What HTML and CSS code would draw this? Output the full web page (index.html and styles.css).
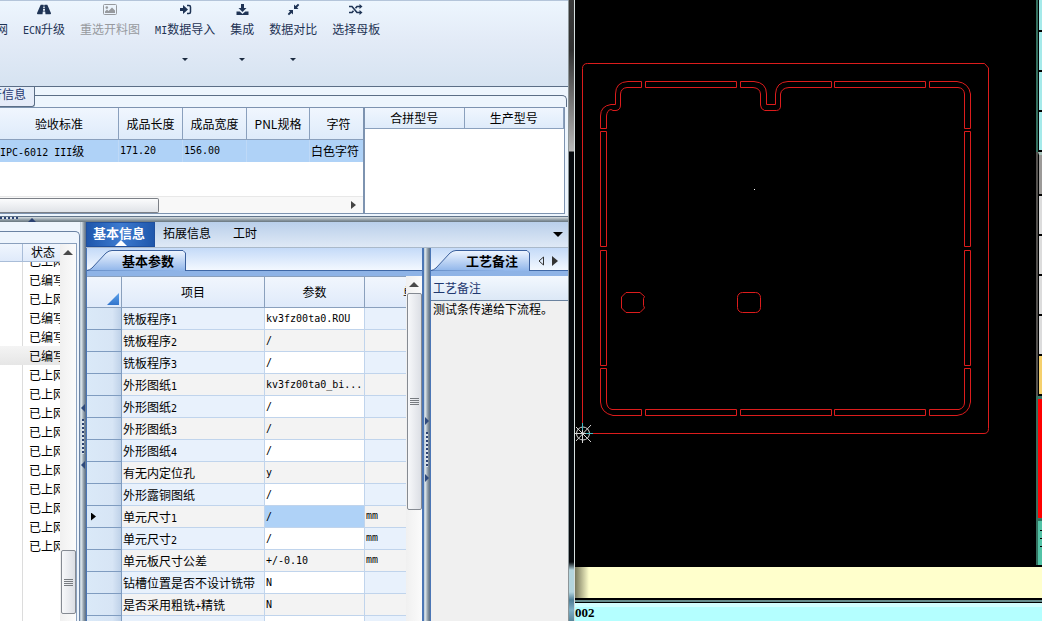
FILE: index.html
```html
<!DOCTYPE html>
<html lang="zh-CN">
<head>
<meta charset="utf-8">
<title>基本信息</title>
<link rel="stylesheet" href="styles.css">
</head>
<body>
<div class="desktop">
  <main class="app">
    <nav class="toolbar">
      <button class="tool"><span class="tool-icon"></span><span class="tool-label">网</span></button>
      <button class="tool"><svg class="tool-icon" viewBox="0 0 576 512" width="14" height="13"><path fill="currentColor" d="M573.19 402.67l-139.79-320C428.43 71.29 417.6 64 405.68 64h-97.59l2.45 23.16c.5 4.72-3.21 8.84-7.96 8.84h-29.16c-4.75 0-8.46-4.12-7.96-8.84L267.91 64h-97.59c-11.93 0-22.76 7.29-27.73 18.67L2.8 402.67C-6.45 423.86 8.31 448 30.54 448h196.84l10.31-97.68c.86-8.14 7.72-14.32 15.91-14.32h68.8c8.19 0 15.05 6.18 15.91 14.32L348.62 448h196.84c22.23 0 36.99-24.14 27.73-45.33zM260.4 135.16a8 8 0 0 1 7.96-7.16h39.29c4.09 0 7.53 3.09 7.96 7.16l4.6 43.58c.75 7.09-4.81 13.26-11.93 13.26h-40.54c-7.13 0-12.68-6.17-11.93-13.26l4.59-43.58zM315.64 304h-55.29c-9.5 0-16.91-8.23-15.91-17.68l5.07-48c.86-8.14 7.72-14.32 15.91-14.32h45.15c8.19 0 15.05 6.18 15.91 14.32l5.07 48c1 9.45-6.41 17.68-15.91 17.68z"/></svg><span class="tool-label"><span class="code">ECN</span>升级</span></button>
      <button class="tool" disabled><svg class="tool-icon" viewBox="0 0 14 13" width="14" height="13"><rect x=".5" y="1.5" width="13" height="10" rx="1" fill="none" stroke="currentColor"/><circle cx="3.8" cy="4.6" r="1.3" fill="currentColor"/><path fill="currentColor" d="M2 10V8.500L4 6.500L5.500 8L9 4.500L12 7.500V10Z"/></svg><span class="tool-label">重选开料图</span></button>
      <button class="tool"><svg class="tool-icon" viewBox="0 0 13 13" width="13" height="13"><path fill="currentColor" d="M1 5H4V2L9 6.500L4 11V8H1Z"/><path fill="none" stroke="currentColor" stroke-width="1.500" d="M8 2.500H10Q11.500 2.500 11.500 4V9Q11.500 10.500 10 10.500H8"/></svg><span class="tool-label"><span class="code">MI</span>数据导入</span><i class="caret"></i></button>
      <button class="tool"><svg class="tool-icon" viewBox="0 0 13 13" width="13" height="13"><path fill="currentColor" d="M5 1H8V5H10.500L6.500 9L2.500 5H5ZM.5 8.500H3.700L6.500 11L9.300 8.500H12.500V12H.5Z"/></svg><span class="tool-label">集成</span><i class="caret"></i></button>
      <button class="tool"><svg class="tool-icon" viewBox="0 0 13 13" width="13" height="13"><path fill="currentColor" d="M7 6V1.500L8.500 3L11 .7L12.300 2L10 4.500L11.500 6ZM6 7V11.500L4.500 10L2 12.300L.7 11L3 8.500L1.500 7Z"/></svg><span class="tool-label">数据对比</span><i class="caret"></i></button>
      <button class="tool"><svg class="tool-icon" viewBox="0 0 14 13" width="14" height="13"><path fill="none" stroke="currentColor" stroke-width="1.600" d="M0 3.500H3L8 9.500H11M0 9.500H3L4.500 7.700M6.500 5.200L8 3.500H11"/><path fill="currentColor" d="M10.500 1L13.500 3.500L10.500 6ZM10.500 7L13.500 9.500L10.500 12Z"/></svg><span class="tool-label">选择母板</span></button>
    </nav>

    <section class="upper">
      <div class="upper-tabs"><button class="upper-tab">字符信息</button><div class="upper-rule"></div></div>
      <div class="upper-grids">
        <div class="spec-grid">
          <table class="spec-table">
            <colgroup><col><col class="col-64"><col class="col-64"><col class="col-63"><col class="col-53"></colgroup>
            <thead><tr><th>验收标准</th><th>成品长度</th><th>成品宽度</th><th>PNL规格</th><th>字符</th></tr></thead>
            <tbody><tr><td class="flush"><span class="code">IPC-6012 III</span>级</td><td class="code">171.20</td><td class="code">156.00</td><td></td><td>白色字符</td></tr></tbody>
          </table>
          <div class="hscroll"><div class="hthumb"></div><i class="arrow-right"></i></div>
        </div>
        <div class="model-grid">
          <table class="model-table"><thead><tr><th>合拼型号</th><th>生产型号</th></tr></thead></table>
        </div>
      </div>
    </section>

    <div class="hsplit"><i class="dots-h"></i><i class="grip-up"></i></div>

    <section class="lower">
      <aside class="status-pane">
        <div class="status-group">
          <div class="status-list">
            <div class="status-head"><span></span><b>状态</b></div>
            <div class="status-view">
              <table class="status-table"><tbody>
                <tr><td></td><td>已上网</td></tr><tr><td></td><td>已编写</td></tr><tr><td></td><td>已上网</td></tr><tr><td></td><td>已编写</td></tr><tr><td></td><td>已编写</td></tr><tr class="current"><td></td><td>已编写</td></tr><tr><td></td><td>已上网</td></tr><tr><td></td><td>已上网</td></tr><tr><td></td><td>已上网</td></tr><tr><td></td><td>已上网</td></tr><tr><td></td><td>已上网</td></tr><tr><td></td><td>已上网</td></tr><tr><td></td><td>已上网</td></tr><tr><td></td><td>已上网</td></tr><tr><td></td><td>已上网</td></tr><tr><td></td><td>已上网</td></tr>
              </tbody></table>
            </div>
          </div>
          <div class="vscroll"><i class="arrow-up"></i><div class="vthumb low"><i class="lines"></i></div></div>
        </div>
      </aside>
      <div class="vsplit left"><i class="grip-left"></i><i class="dots-v"></i><i class="grip-left"></i></div>

      <div class="detail">
        <div class="main-tabs" role="tablist">
          <button class="main-tab active" role="tab" aria-selected="true">基本信息</button>
          <button class="main-tab" role="tab">拓展信息</button>
          <button class="main-tab" role="tab">工时</button>
          <button class="tab-menu" aria-label="更多"><i class="arrow-down"></i></button>
        </div>
        <div class="detail-body">
          <div class="param-pane">
            <div class="sub-tabs" role="tablist">
              <button class="sub-tab" role="tab"><svg class="tab-shape" viewBox="0 0 99 21" preserveAspectRatio="none"><defs><linearGradient id="tabfill" x2="0" y2="1"><stop stop-color="#f0f6ff"/><stop offset="1" stop-color="#8fb5ea"/></linearGradient></defs><path d="M0 20.500Q3 20 5 18L19 3Q22 .5 25 .5H96L98.500 3V21" fill="url(#tabfill)" stroke="#3a5f9c"/></svg><span>基本参数</span></button>
            </div>
            <div class="param-area">
              <div class="param-view">
                <table class="param-table">
                  <colgroup><col class="col-mark"><col><col class="col-value"><col class="col-unit"></colgroup>
                  <thead><tr><th class="corner"><i></i></th><th>项目</th><th>参数</th><th class="cut">单位</th></tr></thead>
                  <tbody>
                    <tr><th></th><td>铣板程序<span class="code">1</span></td><td class="code">kv3fz00ta0.ROU</td><td></td></tr>
                    <tr><th></th><td>铣板程序<span class="code">2</span></td><td class="code">/</td><td></td></tr>
                    <tr><th></th><td>铣板程序<span class="code">3</span></td><td class="code">/</td><td></td></tr>
                    <tr><th></th><td>外形图纸<span class="code">1</span></td><td class="code">kv3fz00ta0_bi...</td><td></td></tr>
                    <tr><th></th><td>外形图纸<span class="code">2</span></td><td class="code">/</td><td></td></tr>
                    <tr><th></th><td>外形图纸<span class="code">3</span></td><td class="code">/</td><td></td></tr>
                    <tr><th></th><td>外形图纸<span class="code">4</span></td><td class="code">/</td><td></td></tr>
                    <tr><th></th><td>有无内定位孔</td><td class="code">y</td><td></td></tr>
                    <tr><th></th><td>外形露铜图纸</td><td class="code">/</td><td></td></tr>
                    <tr><th><i class="row-mark"></i></th><td>单元尺寸<span class="code">1</span></td><td class="code selected">/</td><td class="unit">mm</td></tr>
                    <tr><th></th><td>单元尺寸<span class="code">2</span></td><td class="code">/</td><td class="unit">mm</td></tr>
                    <tr><th></th><td>单元板尺寸公差</td><td class="code">+/-0.10</td><td class="unit">mm</td></tr>
                    <tr><th></th><td>钻槽位置是否不设计铣带</td><td class="code">N</td><td></td></tr>
                    <tr><th></th><td>是否采用粗铣<span class="code">+</span>精铣</td><td class="code">N</td><td></td></tr>
                    <tr><th></th><td></td><td></td><td></td></tr>
                  </tbody>
                </table>
              </div>
              <div class="vscroll"><i class="arrow-up"></i><div class="vthumb tall"><i class="lines"></i></div></div>
            </div>
          </div>
          <div class="vsplit right"><i class="grip-right"></i><i class="dots-v"></i><i class="grip-right"></i></div>
          <div class="note-pane">
            <div class="sub-tabs" role="tablist">
              <button class="sub-tab" role="tab"><svg class="tab-shape" viewBox="0 0 99 21" preserveAspectRatio="none"><path d="M0 20.500Q3 20 5 18L19 3Q22 .5 25 .5H96L98.500 3V21" fill="url(#tabfill)" stroke="#3a5f9c"/></svg><span>工艺备注</span></button>
              <button class="tab-step" aria-label="上一页"><svg viewBox="0 0 6 10" width="6" height="10"><path d="M5.500 1V9L1 5Z" fill="none" stroke="#333"/></svg></button>
              <button class="tab-step" aria-label="下一页"><svg viewBox="0 0 6 10" width="6" height="10"><path d="M0 0V10L6 5Z" fill="#333"/></svg></button>
            </div>
            <div class="note-body">
              <label class="note-title" for="note">工艺备注</label>
              <textarea class="note-text" id="note" readonly>测试条传递给下流程。</textarea>
            </div>
          </div>
        </div>
      </div>
    </section>
  </main>

  <div class="frame"></div>

  <section class="cad">
    <div class="cad-main">
      <svg class="board" viewBox="575 0 461 567" width="461" height="567" fill="none" stroke="#dc1c1c">
        <path d="M582.500 433.500V68.500Q582.500 63.500 587.500 63.500H984.500L988.500 68V428.500Q988.500 433.500 984 433.500H582.500"/>
        <path d="M641.500 81.500H628Q615.500 82 615.500 94V104.500H611Q600.500 106 600.500 116V128.500H606.500V116Q607 110 611 109.500L613 110.500H616Q620.500 110 620.500 105V94Q621 88 627 87.500H641.500Z"/>
        <path d="M645.500 81.500H736.500V87.500H645.500ZM834.500 81.500H925.500V87.500H834.500Z"/>
        <path d="M740.500 81.500H754Q766.500 82.500 766.500 94V104.500H775.500V94Q776 82 788 81.500H831.500V87.500H789Q781.500 88 780.500 94V105Q781 110 776.500 110.500H764.500Q760.500 109 760.500 105V94Q760 88 753 87.500H740.500Z"/>
        <path d="M929.500 81.500H957Q969 83 970.500 94V128.500H964.500V94Q964 88 958 87.500H929.500Z"/>
        <path d="M600.500 131.500H606.500V246.500H600.500ZM600.500 250.500H606.500V365.500H600.500ZM964.500 131.500H970.500V246.500H964.500ZM964.500 250.500H970.500V365.500H964.500Z"/>
        <path d="M600.500 368.500H606.500V402Q607 408.500 612 409.500H641.500V415.500H613Q601 413 600.500 402Z"/>
        <path d="M645.500 409.500H736.500V415.500H645.500ZM740.500 409.500H831.500V415.500H740.500ZM834.500 409.500H925.500V415.500H834.500Z"/>
        <path d="M964.500 368.500H970.500V402Q969 414 957 415.500H929.500V409.500H959Q964 408 964.500 403Z"/>
        <path d="M626 292.500H640L644.500 296.500L643.500 298.500V305.500L644.500 308L640 312.500H626L621.500 308V297Z"/>
        <rect x="737.500" y="292.500" width="23" height="20" rx="5"/>
        <g stroke="#d4d4d4"><circle cx="583" cy="433.500" r="6.500"/><path d="M575 433.500H590M582.500 426V443M576 427L591 442M576 441L591 425"/></g>
        <path stroke="#46b8c0" d="M582.500 423V430M586 433.500H593"/>
        <path stroke="#fff" d="M754 189.500H755"/>
      </svg>
      <div class="palette">
        <i class="swatch cyan"></i><i class="swatch cyan"></i><i class="swatch cyan"></i><i class="swatch cyan"></i>
        <i class="swatch gray first"></i><i class="swatch gray"></i><i class="swatch gray"></i><i class="swatch gray"></i><i class="swatch gray"></i>
        <i class="swatch gray yellow"></i><i class="swatch red"></i><i class="swatch teal"></i>
      </div>
    </div>
    <div class="command-line"></div>
    <footer class="cad-status"><span>002</span></footer>
  </section>
</div>
</body>
</html>
```

FILE: styles.css
```css
* { box-sizing: border-box; }
body { margin: 0; overflow: hidden; font: 12px/16px "Noto Sans CJK SC", sans-serif; color: #000; background: #000; }
button { border: 0; padding: 0; background: none; font: inherit; color: inherit; white-space: nowrap; }
table { border-collapse: separate; border-spacing: 0; table-layout: fixed; width: 100%; }
th { font-weight: 400; padding: 0; white-space: nowrap; overflow: hidden; }
td { padding: 0 1px; white-space: nowrap; overflow: hidden; }
i { display: block; flex: none; }
.code { font-family: "DejaVu Sans Mono", "Noto Sans CJK SC", monospace; font-size: 10px; line-height: 12px; }
.unit { font-family: "Liberation Mono", monospace; font-size: 10px; }

.desktop { display: grid; grid-template-columns: minmax(0, 568fr) 7px minmax(0, 467fr); height: 100vh; }
.app { display: flex; flex-direction: column; min-height: 0; overflow: hidden; background: #edf5fd; }

/* toolbar */
.toolbar { display: flex; gap: 15px; flex: none; height: 87px; margin-left: -4px; border-top: 1px solid #b4c5da; border-bottom: 1px solid #5b6e86; background: linear-gradient(#edf6fe, #e3ebf7 45%, #d6e3f1); }
.tool { display: flex; flex-direction: column; align-items: center; padding-top: 2px; color: #1f3455; }
.tool:disabled { color: #979a9e; }
.tool-icon { display: block; flex: none; height: 13px; margin-bottom: 4px; }
.tool-label { height: 17px; line-height: 17px; }
.caret { margin-top: 21px; border: 3px solid transparent; border-top-color: #1b2a40; border-bottom: 0; }

/* order grids */
.upper { flex: none; height: 130px; padding-right: 1px; border-bottom: 1px solid #61748a; }
.upper-tabs { display: flex; height: 20px; }
.upper-tab { display: flex; justify-content: flex-end; align-items: center; width: 35px; height: 20px; padding: 0 8px 6px 0; overflow: hidden; border: solid #5b6e86; border-width: 0 1px 1px 0; border-radius: 0 0 3px 0; background: linear-gradient(#e4edf9, #e6ebf8); color: #1f3870; }
.upper-rule { flex: 1; margin-top: 8px; border: solid #5b6e86; border-width: 1px 1px 0 0; border-radius: 0 5px 0 0; }
.upper-grids { display: flex; height: 107px; padding-right: 2px; }
.spec-grid { display: flex; flex-direction: column; flex: 1; border: solid #7d93b0; border-width: 1px 2px 1px 0; background: #fff; }
.spec-table th { height: 32px; border: solid #8aa0bd; border-width: 0 1px 1px 0; background: linear-gradient(#f0f6fe, #deebfa); }
.spec-table th:last-child { padding-left: 4px; }
.spec-table th:last-child, .spec-table td:last-child { border-right: 0; }
.spec-table td { height: 22px; border-right: 1px solid #bed9f7; background: #afd2f7; }
.spec-table td.flush { padding: 0; }
.col-64 { width: 64px; }
.col-63 { width: 63px; }
.col-53 { width: 53px; }
.hscroll { display: flex; align-items: center; justify-content: space-between; height: 17px; margin-top: auto; padding-right: 7px; background: #f8f8f8; border-top: 1px solid #e8e8e8; }
.hthumb { width: 159px; height: 15px; border: 1px solid #7c8087; border-left: 0; border-radius: 0 2px 2px 0; background: linear-gradient(#fbfcfd, #e0e3e8); }
.arrow-right { border: 4px solid transparent; border-left: 5px solid #444; border-right: 0; }
.model-grid { width: 200px; border: 1px solid #7d93b0; border-left: 0; background: #fff; }
.model-table th { height: 21px; border: solid #8aa0bd; border-width: 0 1px 1px 0; background: linear-gradient(#f0f6fe, #deebfa); }

/* splitters */
.hsplit { display: flex; gap: 10px; flex: none; height: 5px; background: linear-gradient(#d8dee2, #8d9aa2 60%, #68767f); }
.dots-h { width: 18px; height: 2px; background: repeating-linear-gradient(90deg, #2b4272 0 2px, #dce4ec 2px 4px); }
.grip-up { margin-top: 1px; border: 4px solid transparent; border-bottom-color: #2b4272; border-top: 0; }
.vsplit { display: flex; flex-direction: column; align-items: center; gap: 7px; flex: none; width: 6px; background: linear-gradient(90deg, #b7c8d7, #d5dfe5 25%, #8997a3 65%, #5b6f86); }
.vsplit.left { padding-top: 182px; }
.vsplit.right { padding-top: 169px; }
.grip-left { border: 4px solid transparent; border-right-color: #2f4a7c; border-left: 0; }
.grip-right { border: 4px solid transparent; border-left-color: #2f4a7c; border-right: 0; }
.dots-v { width: 2px; height: 35px; background: repeating-linear-gradient(#2b4272 0 2px, #dce4ec 2px 4px); }

.lower { display: flex; flex: 1; min-height: 0; }

/* status list */
.status-pane { display: flex; flex: none; width: 80px; padding-top: 9px; background: #eef5fd; }
.status-group { display: flex; flex: 1; padding: 11px 2px 0 0; border: solid #6b83a3; border-width: 1px 1px 0 0; border-radius: 0 5px 0 0; }
.status-list { display: flex; flex-direction: column; flex: 1; min-width: 0; border-top: 1px solid #8aa0bd; background: #fff; }
.status-head { display: flex; flex: none; height: 18px; border-bottom: 1px solid #a9bdd8; background: linear-gradient(#f0f6fe, #dfeafa); }
.status-head span { width: 23px; border-right: 1px solid #a9bdd8; }
.status-head b { padding-left: 8px; font-weight: 400; line-height: 16px; }
.status-view { flex: 1; overflow: hidden; background: linear-gradient(90deg, transparent 22px, #dcdcdc 22px 23px, transparent 23px); }
.status-table { margin-top: -11px; }
.status-table td { height: 19px; padding: 0; line-height: 18px; text-overflow: clip; }
.status-table td:first-child { width: 23px; }
.status-table td:last-child { padding-left: 6px; }
.status-table .current td { background: linear-gradient(#f4f4f4, #e6e6e6); }
.vscroll { display: flex; flex-direction: column; align-items: center; flex: none; width: 16px; background: linear-gradient(90deg, #f0f0f0, #fbfbfb); }
.status-group .vscroll { width: 17px; border: solid #8aa0bd; border-width: 1px 1px 0 0; }
.arrow-up { margin: 6px 0; border: 5px solid transparent; border-bottom-color: #4a4a4a; border-top: 0; }
.vthumb { display: flex; align-items: center; justify-content: center; width: 15px; border: 1px solid #858a92; border-radius: 2px; background: linear-gradient(90deg, #f7f8fa, #dcdfe5); }
.vthumb.low { height: 64px; margin-top: 289px; }
.vthumb.tall { height: 217px; }
.lines { width: 9px; height: 7px; background: repeating-linear-gradient(#777b80 0 1px, transparent 1px 2px); }

/* detail */
.detail { display: flex; flex-direction: column; flex: 1; min-width: 0; }
.main-tabs { display: flex; flex: none; height: 26px; border-bottom: 1px solid #aab9ca; background: linear-gradient(#b9cfea, #dfe9f6); }
.main-tab { padding: 0 8px 3px; margin-right: 6px; }
.main-tab.active { position: relative; margin-right: 0; padding: 0 9px 3px 6px; border: 1px solid #1f4f9e; background: linear-gradient(90deg, #1f57ac, #3d7bd0 50%, #1f57ac); color: #fff; font-size: 13px; font-weight: 700; }
.main-tab.active::after { content: ""; position: absolute; bottom: 0; left: 50%; margin-left: -6px; border: 6px solid transparent; border-bottom-color: #fff; border-top: 0; }
.tab-menu { margin-left: auto; padding-right: 5px; }
.arrow-down { border: 5px solid transparent; border-top-color: #000; border-bottom: 0; }
.detail-body { display: flex; flex: 1; min-height: 0; }
.param-pane { display: flex; flex-direction: column; flex: 1; min-width: 0; border: solid #4b76b5; border-width: 0 2px 0 1px; }
.sub-tabs { display: flex; align-items: flex-end; flex: none; height: 28px; border-bottom: 5px solid #8eb3e6; background: linear-gradient(#c4daf8, #f3f8ff 22px, #3f68a6 22px); }
.sub-tab { position: relative; display: flex; align-items: center; justify-content: flex-end; width: 99px; height: 21px; padding-right: 12px; font-size: 13px; font-weight: 700; line-height: 20px; }
.tab-shape { position: absolute; top: 0; left: 0; width: 100%; height: 21px; }
.sub-tab span { position: relative; }
.tab-step { height: 21px; margin-left: 8px; }
.tab-step svg { display: block; }
.param-area { display: flex; flex: 1; min-height: 0; background: #f0f6fd; }
.param-view { flex: 1; min-width: 0; overflow: hidden; }
.col-mark { width: 35px; }
.col-value { width: 100px; }
.col-unit { width: 41px; }
.param-table thead th { height: 32px; border: solid #8aa0bd; border-width: 1px 1px 1px 0; background: linear-gradient(#f1f6fd, #dfeafa); }
.param-table thead th.cut { padding-left: 38px; text-align: left; border-right: 0; }
.corner i { width: 12px; height: 12px; margin: 14px 0 0 20px; background: linear-gradient(#5ba0ea, #3275cc); clip-path: polygon(100% 0, 100% 100%, 0 100%); }
.param-table tbody th { border: solid #7f9cc0; border-width: 0 1px 1px 0; background: linear-gradient(90deg, #dae9f8, #d7e5f5 75%, #bed1e8); }
.param-table td { height: 22px; border: solid #c0d4ec; border-width: 0 1px 1px 0; background: #e8f1fc; }
.param-table td:last-child { border-right: 0; }
.param-table tr:nth-child(even) td { background: #f3f3f3; }
.param-table tr:nth-child(odd) td:nth-child(3) { background: #fff; }
.param-table tr td.selected { background: #afd2f7; }
.row-mark { width: 5px; height: 8px; margin-left: 4px; background: #000; clip-path: polygon(0 0, 100% 50%, 0 100%); }
.note-pane { display: flex; flex-direction: column; flex: none; width: 138px; border-left: 1px solid #4b76b5; }
.note-body { display: flex; flex-direction: column; flex: 1; background: #f0f0f0; }
.note-title { flex: none; height: 25px; padding-left: 2px; border-bottom: 1px solid #6a829e; background: linear-gradient(#f3f8fe, #dce8f6); color: #1f3870; line-height: 23px; }
.note-text { flex: 1; width: 100%; margin: 0; padding: 0 2px; border: 0; outline: 0; resize: none; overflow: hidden; background: #f0f0f0; font: inherit; color: #000; }

/* window edge */
.frame { border: solid #8c9598; border-width: 0 1px; border-right-color: #d5dede; background: linear-gradient(#3a3a3a 0, #303030 50px, #b8b8b8 151px, #05090d 152px, #05090d 562px, #b4d5de 570px, #b4d5de 592px, #4f7e95 600px, #7fb0c6 610px, #5a879b); }

/* board viewer */
.cad { display: flex; flex-direction: column; min-height: 0; overflow: hidden; background: #000; }
.cad-main { display: flex; justify-content: space-between; flex: 1; min-height: 0; overflow: hidden; }
.board { display: block; flex: none; }
.palette { flex: none; width: 4px; }
.swatch { height: 40px; border: solid #000; border-width: 0 0 2px 1px; background: #a5eaea; box-shadow: -2px 0 #34705f; }
.swatch:first-child { height: 32px; }
.swatch.gray { background: #dcdcdc; box-shadow: -2px 0 #55524f; }
.swatch.gray.first { height: 44px; border-top: 3px solid #a8c4bc; background: #9c9a98; }
.swatch.gray.yellow { background: #f5d06c; }
.swatch.red { height: 123px; border: solid #3e7768; border-width: 3px 0 1px; background: #f00; }
.swatch.teal { height: 46px; border: solid #2e705f; border-width: 2px 0 0; background: linear-gradient(#000, #000) 2px 9px / 2px 1px no-repeat, linear-gradient(#000, #000) 2px 17px / 2px 1px no-repeat, linear-gradient(#000, #000) 2px 25px / 2px 1px no-repeat, #52c3a6; }
.command-line { flex: none; height: 31px; background: linear-gradient(90deg, #77775c, #ffffcc 14px); }
.cad-status { flex: none; height: 23px; padding-top: 6px; overflow: hidden; border-top: 2px solid #000; background: linear-gradient(#668c8c 2px, #000 2px 3px, #d2ffff 3px 7px, #b4ffff 7px); color: #000; font: bold 13px/14px "Liberation Serif", serif; }
```
